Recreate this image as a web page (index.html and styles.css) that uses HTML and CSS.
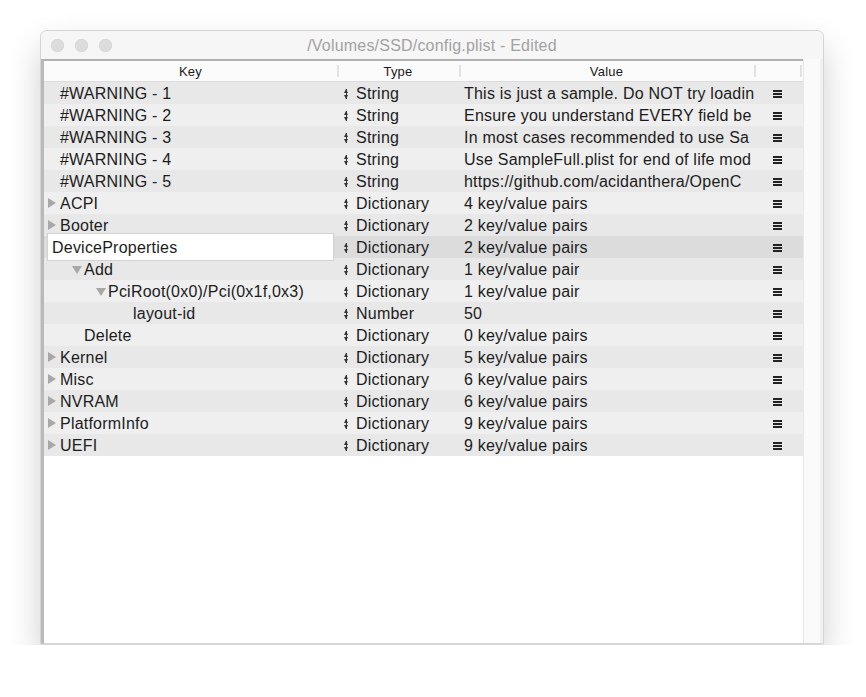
FILE: index.html
```html
<!DOCTYPE html>
<html>
<head>
<meta charset="utf-8">
<link rel="stylesheet" href="styles.css">
</head>
<body>
<div class="window">
  <div class="titlebar">
    <div class="lights"><span class="light"></span><span class="light"></span><span class="light"></span></div>
    <div class="title">/Volumes/SSD/config.plist - Edited</div>
  </div>
  <div class="content">
    <div class="table">
      <div class="header">
        <div class="hcell key">Key</div>
        <div class="hcell type">Type</div>
        <div class="hcell value">Value</div>
        <div class="hcell menu"></div>
        <div class="hcell tail"></div>
      </div>
      <div class="rows">
        <div class="row odd"><div class="cell key l0">#WARNING - 1</div><div class="cell type"><i class="ud"></i>String</div><div class="cell value">This is just a sample. Do NOT try loadin</div><div class="cell menu"><i class="hb"></i></div></div>
        <div class="row even"><div class="cell key l0">#WARNING - 2</div><div class="cell type"><i class="ud"></i>String</div><div class="cell value">Ensure you understand EVERY field be</div><div class="cell menu"><i class="hb"></i></div></div>
        <div class="row odd"><div class="cell key l0">#WARNING - 3</div><div class="cell type"><i class="ud"></i>String</div><div class="cell value">In most cases recommended to use Sa</div><div class="cell menu"><i class="hb"></i></div></div>
        <div class="row even"><div class="cell key l0">#WARNING - 4</div><div class="cell type"><i class="ud"></i>String</div><div class="cell value">Use SampleFull.plist for end of life mod</div><div class="cell menu"><i class="hb"></i></div></div>
        <div class="row odd"><div class="cell key l0">#WARNING - 5</div><div class="cell type"><i class="ud"></i>String</div><div class="cell value">https://github.com/acidanthera/OpenC</div><div class="cell menu"><i class="hb"></i></div></div>
        <div class="row even"><div class="cell key l0"><b class="tri right"></b>ACPI</div><div class="cell type"><i class="ud"></i>Dictionary</div><div class="cell value">4 key/value pairs</div><div class="cell menu"><i class="hb"></i></div></div>
        <div class="row odd"><div class="cell key l0"><b class="tri right"></b>Booter</div><div class="cell type"><i class="ud"></i>Dictionary</div><div class="cell value">2 key/value pairs</div><div class="cell menu"><i class="hb"></i></div></div>
        <div class="row selected"><div class="cell key editing"><div class="field">DeviceProperties</div></div><div class="cell type"><i class="ud"></i>Dictionary</div><div class="cell value">2 key/value pairs</div><div class="cell menu"><i class="hb"></i></div></div>
        <div class="row odd"><div class="cell key l1"><b class="tri down"></b>Add</div><div class="cell type"><i class="ud"></i>Dictionary</div><div class="cell value">1 key/value pair</div><div class="cell menu"><i class="hb"></i></div></div>
        <div class="row even"><div class="cell key l2"><b class="tri down"></b>PciRoot(0x0)/Pci(0x1f,0x3)</div><div class="cell type"><i class="ud"></i>Dictionary</div><div class="cell value">1 key/value pair</div><div class="cell menu"><i class="hb"></i></div></div>
        <div class="row odd"><div class="cell key l3">layout-id</div><div class="cell type"><i class="ud"></i>Number</div><div class="cell value">50</div><div class="cell menu"><i class="hb"></i></div></div>
        <div class="row even"><div class="cell key l1">Delete</div><div class="cell type"><i class="ud"></i>Dictionary</div><div class="cell value">0 key/value pairs</div><div class="cell menu"><i class="hb"></i></div></div>
        <div class="row odd"><div class="cell key l0"><b class="tri right"></b>Kernel</div><div class="cell type"><i class="ud"></i>Dictionary</div><div class="cell value">5 key/value pairs</div><div class="cell menu"><i class="hb"></i></div></div>
        <div class="row even"><div class="cell key l0"><b class="tri right"></b>Misc</div><div class="cell type"><i class="ud"></i>Dictionary</div><div class="cell value">6 key/value pairs</div><div class="cell menu"><i class="hb"></i></div></div>
        <div class="row odd"><div class="cell key l0"><b class="tri right"></b>NVRAM</div><div class="cell type"><i class="ud"></i>Dictionary</div><div class="cell value">6 key/value pairs</div><div class="cell menu"><i class="hb"></i></div></div>
        <div class="row even"><div class="cell key l0"><b class="tri right"></b>PlatformInfo</div><div class="cell type"><i class="ud"></i>Dictionary</div><div class="cell value">9 key/value pairs</div><div class="cell menu"><i class="hb"></i></div></div>
        <div class="row odd"><div class="cell key l0"><b class="tri right"></b>UEFI</div><div class="cell type"><i class="ud"></i>Dictionary</div><div class="cell value">9 key/value pairs</div><div class="cell menu"><i class="hb"></i></div></div>
      </div>
    </div>
    <div class="scroll"></div>
  </div>
</div>
</body>
</html>
```
FILE: styles.css
```css
html, body {
  margin: 0;
  padding: 0;
  background: #ffffff;
}
body {
  font-family: "Liberation Sans", Arial, sans-serif;
  color: #1c1c1c;
}
.window {
  margin: 31px 0 0 41px;
  width: 782px;
  height: 614px;
  background: #f6f6f6;
  border-radius: 6px 6px 3px 3px;
  box-shadow: 0 0 0 1px #d4d4d4, 0 16px 34px rgba(0, 0, 0, 0.2);
  display: flex;
  flex-direction: column;
  overflow: hidden;
}
.titlebar {
  height: 28px;
  flex: none;
  display: flex;
  align-items: center;
  position: relative;
  background: #f6f6f6;
}
.lights {
  display: flex;
  gap: 11px;
  padding-left: 10px;
}
.light {
  width: 13px;
  height: 13px;
  border-radius: 50%;
  background: #dcdcdc;
  box-shadow: inset 0 0 0 0.5px #d0d0d0;
}
.title {
  position: absolute;
  left: 0;
  right: 0;
  top: 6px;
  text-align: center;
  font-size: 16px;
  color: #a2a2a2;
  letter-spacing: 0.2px;
}
.content {
  flex: 1;
  display: flex;
  border-left: 3px solid #b9b9b9;
  border-bottom: 2px solid #d6d6d6;
  border-top: 2px solid #b0b0b0;
  background: #ffffff;
}
.table {
  width: 759px;
  flex: none;
  display: flex;
  flex-direction: column;
  background: #ffffff;
}
.scroll {
  flex: 1;
  background: #fafafa;
  border-left: 1px solid #e8e8e8;
  margin-top: -2px;
  border-right: 3px solid #f0f0f0;
}
.header {
  height: 20px;
  display: flex;
  align-items: center;
  background: #fbfbfb;
  border-bottom: 1px solid #dcdcdc;
  font-size: 13px;
  letter-spacing: 0.2px;
  color: #1a1a1a;
}
.hcell {
  height: 20px;
  display: flex;
  align-items: center;
  justify-content: center;
  position: relative;
  padding-top: 1px;
  box-sizing: border-box;
}
.hcell.type::before,
.hcell.value::before,
.hcell.menu::before,
.hcell.tail::before {
  content: "";
  position: absolute;
  left: 0;
  top: 4px;
  width: 2px;
  height: 12px;
  background: #e2e2e2;
}
.key { width: 293px; }
.type { width: 122px; }
.value { width: 295px; }
.menu { width: 46px; }
.tail { width: 3px; }
.rows {
  display: flex;
  flex-direction: column;
}
.row {
  height: 22px;
  display: flex;
  align-items: center;
  font-size: 16px;
  letter-spacing: 0.22px;
}
.row.odd { background: #e8e8e8; }
.row.even { background: #efefef; }
.row.selected { background: #dcdcdc; }
.cell {
  height: 22px;
  display: flex;
  align-items: center;
  white-space: nowrap;
  overflow: hidden;
  box-sizing: border-box;
  padding-top: 2px;
}
.cell.key { position: relative; }
.l0 { padding-left: 16px; }
.l1 { padding-left: 40px; }
.l2 { padding-left: 64px; }
.l3 { padding-left: 89px; }
.tri {
  position: absolute;
  top: 6px;
  width: 0;
  height: 0;
}
.l0 .tri { left: 4px; }
.l1 .tri { left: 28px; }
.l2 .tri { left: 52px; }
.tri.right {
  border-top: 5px solid transparent;
  border-bottom: 5px solid transparent;
  border-left: 8px solid #a8a8a8;
}
.tri.down {
  top: 8px;
  border-left: 5px solid transparent;
  border-right: 5px solid transparent;
  border-top: 8px solid #a8a8a8;
}
.cell.editing {
  overflow: visible;
  padding-left: 3px;
  padding-top: 0;
}
.field {
  width: 287px;
  height: 28px;
  box-sizing: border-box;
  background: #ffffff;
  border: 1px solid #d2d2d2;
  display: flex;
  align-items: center;
  padding-left: 4px;
  padding-top: 2px;
  position: relative;
  z-index: 1;
}
.cell.type { padding-left: 7px; }
.ud {
  display: inline-block;
  width: 5px;
  height: 10px;
  margin-right: 7px;
  margin-top: -1px;
  background:
    linear-gradient(#333, #333) center / 1px 10px no-repeat;
  position: relative;
}
.ud::before, .ud::after {
  content: "";
  position: absolute;
  left: 0;
  width: 0;
  height: 0;
  border-left: 2.5px solid transparent;
  border-right: 2.5px solid transparent;
}
.ud::before { top: 0; border-bottom: 4px solid #333; }
.ud::after { bottom: 0; border-top: 4px solid #333; }
.cell.value { padding-left: 5px; }
.cell.menu {
  justify-content: center;
  padding-left: 1px;
  padding-top: 0;
}
.hb {
  display: block;
  width: 9px;
  height: 8px;
  margin-top: 2px;
  background:
    linear-gradient(#222, #222) 0 0 / 9px 2px no-repeat,
    linear-gradient(#222, #222) 0 3px / 9px 2px no-repeat,
    linear-gradient(#222, #222) 0 6px / 9px 2px no-repeat;
}
```
